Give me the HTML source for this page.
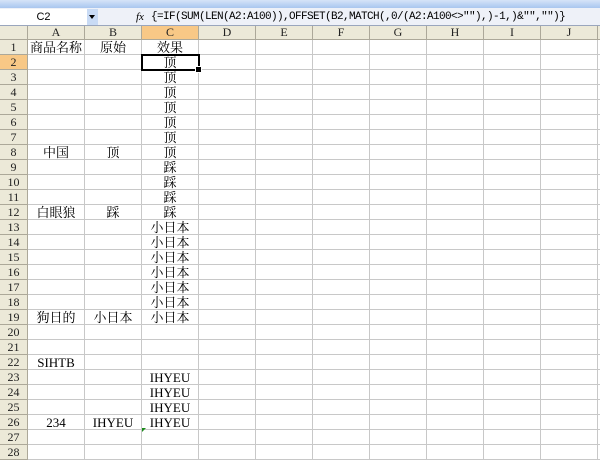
<!DOCTYPE html>
<html><head><meta charset="utf-8"><style>
*{margin:0;padding:0;box-sizing:border-box}
body{width:600px;height:447px;overflow:hidden;background:#fff;position:relative;font-family:"Liberation Serif","Noto Serif CJK SC",serif;font-size:13px;color:#000}
.tb{position:absolute;left:0;top:0;width:600px;height:8px;background:linear-gradient(#d6e4f8,#a9c6ef)}
.fb{position:absolute;left:0;top:8px;width:600px;height:18px;background:#eef1f8;border-bottom:1px solid #9aa6bd}
.nb{position:absolute;left:0;top:9px;width:87px;height:16px;background:#fff;text-align:center;font-family:"Liberation Sans",sans-serif;font-size:11px;line-height:16px}
.dd{position:absolute;left:87px;top:9px;width:11px;height:16px;background:#c9dbf5}
.dd:after{content:"";position:absolute;left:2px;top:6px;border:3px solid transparent;border-top:4px solid #000}
.fx{position:absolute;left:136px;top:9px;font-style:italic;font-size:11px;line-height:16px}
.ft{position:absolute;left:151px;top:8px;font-family:"Liberation Mono",monospace;font-size:11px;line-height:18px;letter-spacing:-0.6px;white-space:nowrap}
.c{position:absolute;border-right:1px solid #c8c8c8;border-bottom:1px solid #c8c8c8;text-align:center;line-height:15px;white-space:nowrap;overflow:visible}
.h{background:#ece9d8;border-right:1px solid #aca899;border-bottom:1px solid #aca899;font-size:12px;color:#222}
.o{background:#f8c886}
.sel{position:absolute;left:141px;top:54px;width:59px;height:17px;border:2px solid #000}
.sel:after{content:"";position:absolute;right:-4px;bottom:-4px;width:5px;height:5px;background:#000;border:1px solid #fff}
</style></head><body>
<div class="tb"></div>
<div class="fb"></div>
<div class="nb">C2</div><div class="dd"></div>
<div class="fx">fx</div>
<div class="ft">{=IF(SUM(LEN(A2:A100)),OFFSET(B2,MATCH(,0/(A2:A100&lt;&gt;""),)-1,)&amp;"","")}</div>
<div id="g"></div>
<div class="sel"></div>
<div style="position:absolute;left:142px;top:428px;width:0;height:0;border-top:4px solid #1a8a1a;border-right:4px solid transparent"></div>
<script>
var xs=[0,28,85,142,199,256,313,370,427,484,541,598,655];
var cols=["","A","B","C","D","E","F","G","H","I","J","K"];
var data={1:["商品名称","原始","效果"],8:["中国","顶","顶"],12:["白眼狼","踩","踩"],19:["狗日的","小日本","小日本"],22:["SIHTB","",""],26:["234","IHYEU","IHYEU"]};
for(var r=2;r<=7;r++)data[r]=["","","顶"];
for(r=9;r<=11;r++)data[r]=["","","踩"];
for(r=13;r<=18;r++)data[r]=["","","小日本"];
for(r=23;r<=25;r++)data[r]=["","","IHYEU"];
var h="";
for(var c=0;c<12;c++){h+='<div class="c h'+(c==3?' o':'')+'" style="left:'+xs[c]+'px;top:26px;width:'+(xs[c+1]-xs[c])+'px;height:14px;line-height:13px">'+cols[c]+'</div>';}
for(r=1;r<=28;r++){var y=40+15*(r-1);
 h+='<div class="c h'+(r==2?' o':'')+'" style="left:0;top:'+y+'px;width:28px;height:15px">'+r+'</div>';
 for(c=1;c<12;c++){var t=(data[r]&&c<=3)?data[r][c-1]:"";
  h+='<div class="c" style="left:'+xs[c]+'px;top:'+y+'px;width:'+(xs[c+1]-xs[c])+'px;height:15px">'+t+'</div>';}}
document.getElementById("g").innerHTML=h;
</script>
</body></html>
